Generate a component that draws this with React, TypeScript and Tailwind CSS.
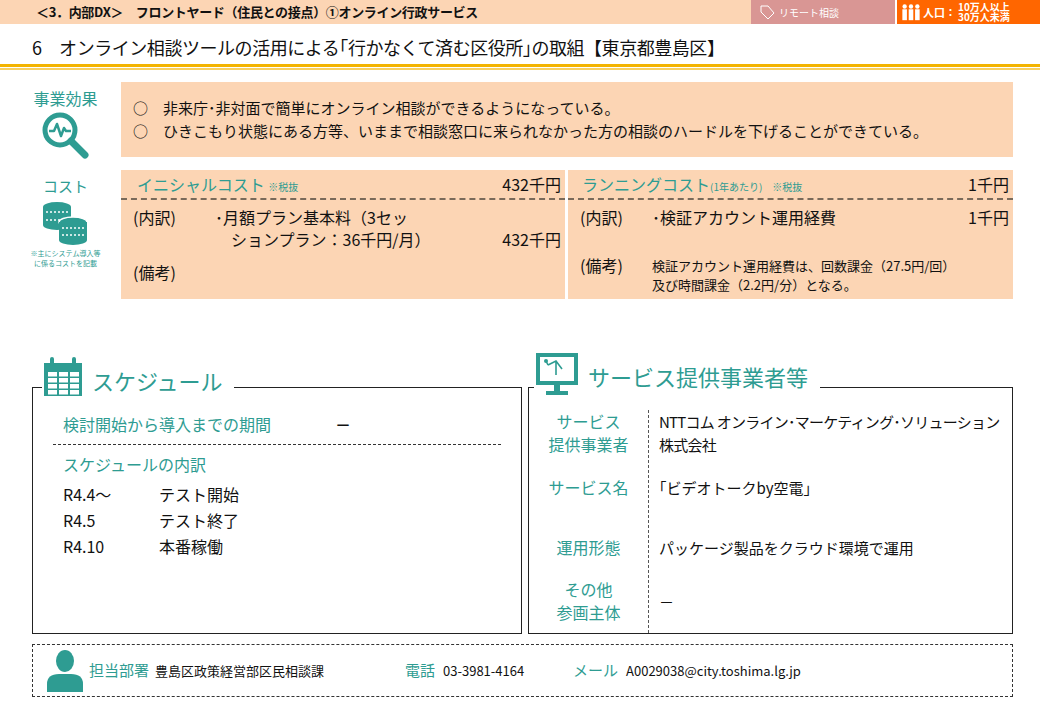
import React from "react";

const T = "#2e9c92";

function SearchIcon() {
  return (
    <svg width="52" height="50" viewBox="0 0 52 50">
      <circle cx="20" cy="20" r="15" fill="none" stroke={T} strokeWidth="5" />
      <path d="M9 21 h5 l3 -7 l4 12 l3 -8 l2 3 h5" fill="none" stroke={T} strokeWidth="2.5" strokeLinejoin="round" />
      <path d="M31 31 L45 45" stroke={T} strokeWidth="7" strokeLinecap="round" />
    </svg>
  );
}

function CoinsIcon() {
  return (
    <svg width="50" height="46" viewBox="0 0 50 46">
      <ellipse cx="17" cy="7" rx="14" ry="5" fill={T} />
      <rect x="3" y="7" width="28" height="18" fill={T} />
      <ellipse cx="17" cy="25" rx="14" ry="5" fill={T} />
      <path d="M6 12 h22 M6 20 h22" stroke="#fff" strokeWidth="1.5" strokeDasharray="2 2" />
      <ellipse cx="33" cy="22" rx="14" ry="5" fill={T} stroke="#fff" strokeWidth="1.5" />
      <rect x="19" y="22" width="28" height="18" fill={T} />
      <ellipse cx="33" cy="40" rx="14" ry="5" fill={T} />
      <path d="M22 28 h22 M22 35 h22" stroke="#fff" strokeWidth="1.5" strokeDasharray="2 2" />
    </svg>
  );
}

function CalendarIcon() {
  return (
    <svg width="42" height="42" viewBox="0 0 42 42">
      <rect x="2" y="8" width="38" height="33" fill={T} />
      <rect x="8" y="2" width="4" height="9" rx="2" fill={T} />
      <rect x="30" y="2" width="4" height="9" rx="2" fill={T} />
      {[0, 1, 2, 3].map((r) =>
        [0, 1, 2].map((c) => (
          <rect key={`${r}-${c}`} x={6 + c * 11} y={17 + r * 6} width="9" height="4.5" fill="#fff" />
        ))
      )}
    </svg>
  );
}

function MonitorIcon() {
  return (
    <svg width="46" height="46" viewBox="0 0 46 46">
      <rect x="2" y="2" width="42" height="32" fill={T} />
      <rect x="6" y="6" width="34" height="24" fill="#fff" />
      <path d="M12 10 L14 14 M14 14 L22 10 L28 18 M22 10 L22 24" stroke={T} strokeWidth="1.6" fill="none" />
      <circle cx="12" cy="10" r="2" fill={T} />
      <rect x="20" y="34" width="6" height="6" fill={T} />
      <rect x="12" y="40" width="22" height="4" fill={T} />
    </svg>
  );
}

function PersonIcon() {
  return (
    <svg width="40" height="42" viewBox="0 0 40 42">
      <ellipse cx="20" cy="11" rx="9" ry="11" fill={T} />
      <path d="M2 42 V34 Q2 24 14 24 H26 Q38 24 38 34 V42 Z" fill={T} />
    </svg>
  );
}

export default function App() {
  const font = { fontFamily: '"Noto Sans CJK JP", "Noto Sans", sans-serif' };
  return (
    <div className="w-[1040px] h-[720px] bg-white relative overflow-hidden text-[#111]" style={font}>
      {/* header bar */}
      <div className="flex h-[24px] bg-[#fcd5b4] items-center">
        <div className="flex-1 pl-[36px] text-[13px] font-bold tracking-tight">
          ＜3．内部DX＞　フロントヤード（住民との接点）①オンライン行政サービス
        </div>
        <div className="w-[144px] h-full bg-[#d99694] text-white text-[10px] flex items-center pl-[8px] gap-1">
          <svg width="16" height="16" viewBox="0 0 16 16"><path d="M2 2 L9 2 L15 9 L9 15 L2 8 Z" fill="none" stroke="#fff" strokeWidth="1" /></svg>
          リモート相談
        </div>
        <div className="w-[2px] h-full bg-white" />
        <div className="w-[143px] h-full bg-[#ff6600] text-white flex items-center pl-[4px] gap-[2px]">
          <svg width="20" height="18" viewBox="0 0 22 18" fill="#fff">
            {[0, 7, 14].map((x) => (
              <g key={x}><circle cx={x + 4} cy="3" r="2.4" /><rect x={x + 1.5} y="6" width="5" height="12" /></g>
            ))}
          </svg>
          <span className="text-[11px] font-bold">人口：</span>
          <span className="text-[10px] font-bold leading-[10px] whitespace-nowrap">10万人以上<br />30万人未満</span>
        </div>
      </div>

      {/* title */}
      <div className="pl-[32px] pt-[10px] text-[18px] leading-[26px] tracking-tight">
        6　オンライン相談ツールの活用による｢行かなくて済む区役所｣の取組【東京都豊島区】
      </div>
      <div className="mt-[4px] h-[3px] bg-[#f3b400]" />
      <div className="mt-[1px] h-[2px] bg-[#f8d060]" />

      {/* effects */}
      <div className="flex mt-[12px] pl-[28px] pr-[27px]">
        <div className="w-[93px] flex flex-col items-center">
          <div className="text-[16px] text-[#2e9c92] leading-[20px] mt-[6px] -ml-[18px]">事業効果</div>
          <div className="-ml-[18px] mt-[2px]"><SearchIcon /></div>
        </div>
        <div className="flex-1 h-[75px] bg-[#fcd5b4] pl-[12px] pt-[14px] text-[15px] leading-[23px]">
          <div>○　非来庁･非対面で簡単にオンライン相談ができるようになっている。</div>
          <div>○　ひきこもり状態にある方等、いままで相談窓口に来られなかった方の相談のハードルを下げることができている。</div>
        </div>
      </div>

      {/* cost */}
      <div className="flex mt-[10px] pl-[28px] pr-[27px]">
        <div className="w-[93px] flex flex-col items-center">
          <div className="-ml-[18px] flex flex-col items-center">
            <div className="text-[15px] text-[#2e9c92] leading-[20px] mt-[6px]">コスト</div>
            <div className="mt-[4px]"><CoinsIcon /></div>
            <div className="text-[7px] text-[#2e9c92] leading-[10px] text-center mt-[2px]">※主にシステム導入等<br />に係るコストを記載</div>
          </div>
        </div>
        <div className="flex-1 flex gap-[3px] h-[129px]">
          <div className="w-[444px] bg-[#fcd5b4] flex flex-col text-[16px]">
            <div className="h-[30px] flex items-center justify-between pl-[16px] pr-[4px] border-b-2 border-dashed border-[#7a6a5a]">
              <span className="text-[#2e9c92]">イニシャルコスト <span className="text-[10px]">※税抜</span></span>
              <span>432千円</span>
            </div>
            <div className="flex pl-[12px] pr-[4px] pt-[6px] leading-[22px]">
              <span className="w-[82px]">(内訳)</span>
              <span className="w-[220px]">･月額プラン基本料（3セッ<br />　ションプラン：36千円/月）</span>
              <span className="flex-1 text-right self-end">432千円</span>
            </div>
            <div className="pl-[12px] pt-[10px]">(備考)</div>
          </div>
          <div className="flex-1 bg-[#fcd5b4] flex flex-col text-[16px]">
            <div className="h-[30px] flex items-center justify-between pl-[14px] pr-[4px] border-b-2 border-dashed border-[#7a6a5a]">
              <span className="text-[#2e9c92]">ランニングコスト<span className="text-[10px]">(1年あたり)　※税抜</span></span>
              <span>1千円</span>
            </div>
            <div className="flex pl-[12px] pr-[4px] pt-[6px] leading-[22px]">
              <span className="w-[72px]">(内訳)</span>
              <span className="flex-1">･検証アカウント運用経費</span>
              <span>1千円</span>
            </div>
            <div className="flex pl-[12px] pt-[28px] leading-[19px]">
              <span className="w-[72px]">(備考)</span>
              <span className="text-[13px]">検証アカウント運用経費は、回数課金（27.5円/回）<br />及び時間課金（2.2円/分）となる。</span>
            </div>
          </div>
        </div>
      </div>

      {/* lower sections */}
      <div className="flex gap-[6px] mt-[88px] pl-[32px] pr-[27px]">
        <div className="w-[490px] relative">
          <div className="absolute -top-[32px] left-[10px] flex items-end gap-[8px] bg-white pr-[12px]">
            <CalendarIcon />
            <span className="text-[22px] text-[#2e9c92] leading-[30px] mb-[2px]">スケジュール</span>
          </div>
          <div className="h-[247px] border border-[#222] pt-[22px] px-[20px]">
            <div className="flex items-center h-[28px] text-[16px]">
              <span className="text-[#2e9c92] w-[282px] pl-[10px]">検討開始から導入までの期間</span>
              <span className="font-bold">－</span>
            </div>
            <div className="border-t border-dashed border-[#333] mt-[6px]" />
            <div className="text-[16px] text-[#2e9c92] pl-[10px] mt-[6px] leading-[26px]">スケジュールの内訳</div>
            <div className="pl-[10px] mt-[4px] text-[16px] leading-[26px]">
              <div className="flex"><span className="w-[96px]">R4.4～</span>テスト開始</div>
              <div className="flex"><span className="w-[96px]">R4.5</span>テスト終了</div>
              <div className="flex"><span className="w-[96px]">R4.10</span>本番稼働</div>
            </div>
          </div>
        </div>
        <div className="flex-1 relative">
          <div className="absolute -top-[36px] left-[6px] flex items-end gap-[8px] bg-white pr-[12px]">
            <MonitorIcon />
            <span className="text-[22px] text-[#2e9c92] leading-[30px] mb-[6px]">サービス提供事業者等</span>
          </div>
          <div className="h-[247px] border border-[#222] pt-[22px] flex">
            <div className="w-[120px] flex flex-col text-[16px] text-[#2e9c92] text-center leading-[23px] border-r border-dashed border-[#555]">
              <div className="h-[66px]">サービス<br />提供事業者</div>
              <div className="h-[52px]">サービス名</div>
              <div className="h-[44px] pt-[8px]">運用形態</div>
              <div className="pt-[6px]">その他<br />参画主体</div>
            </div>
            <div className="flex-1 flex flex-col text-[15px] pl-[10px] leading-[23px]">
              <div className="h-[66px] tracking-tighter">NTTコム オンライン･マーケティング･ソリューション<br />株式会社</div>
              <div className="h-[52px]">｢ビデオトークby空電｣</div>
              <div className="h-[44px] pt-[8px]">パッケージ製品をクラウド環境で運用</div>
              <div className="pt-[18px]">－</div>
            </div>
          </div>
        </div>
      </div>

      {/* footer */}
      <div className="ml-[32px] mr-[27px] mt-[10px] h-[53px] border border-dashed border-[#333] flex items-center pl-[12px] text-[13px]">
        <PersonIcon />
        <span className="text-[#2e9c92] text-[15px] ml-[4px]">担当部署</span>
        <span className="ml-[6px] w-[250px]">豊島区政策経営部区民相談課</span>
        <span className="text-[#2e9c92] text-[15px]">電話</span>
        <span className="ml-[8px] w-[130px]">03-3981-4164</span>
        <span className="text-[#2e9c92] text-[15px]">メール</span>
        <span className="ml-[8px]">A0029038@city.toshima.lg.jp</span>
      </div>
    </div>
  );
}
